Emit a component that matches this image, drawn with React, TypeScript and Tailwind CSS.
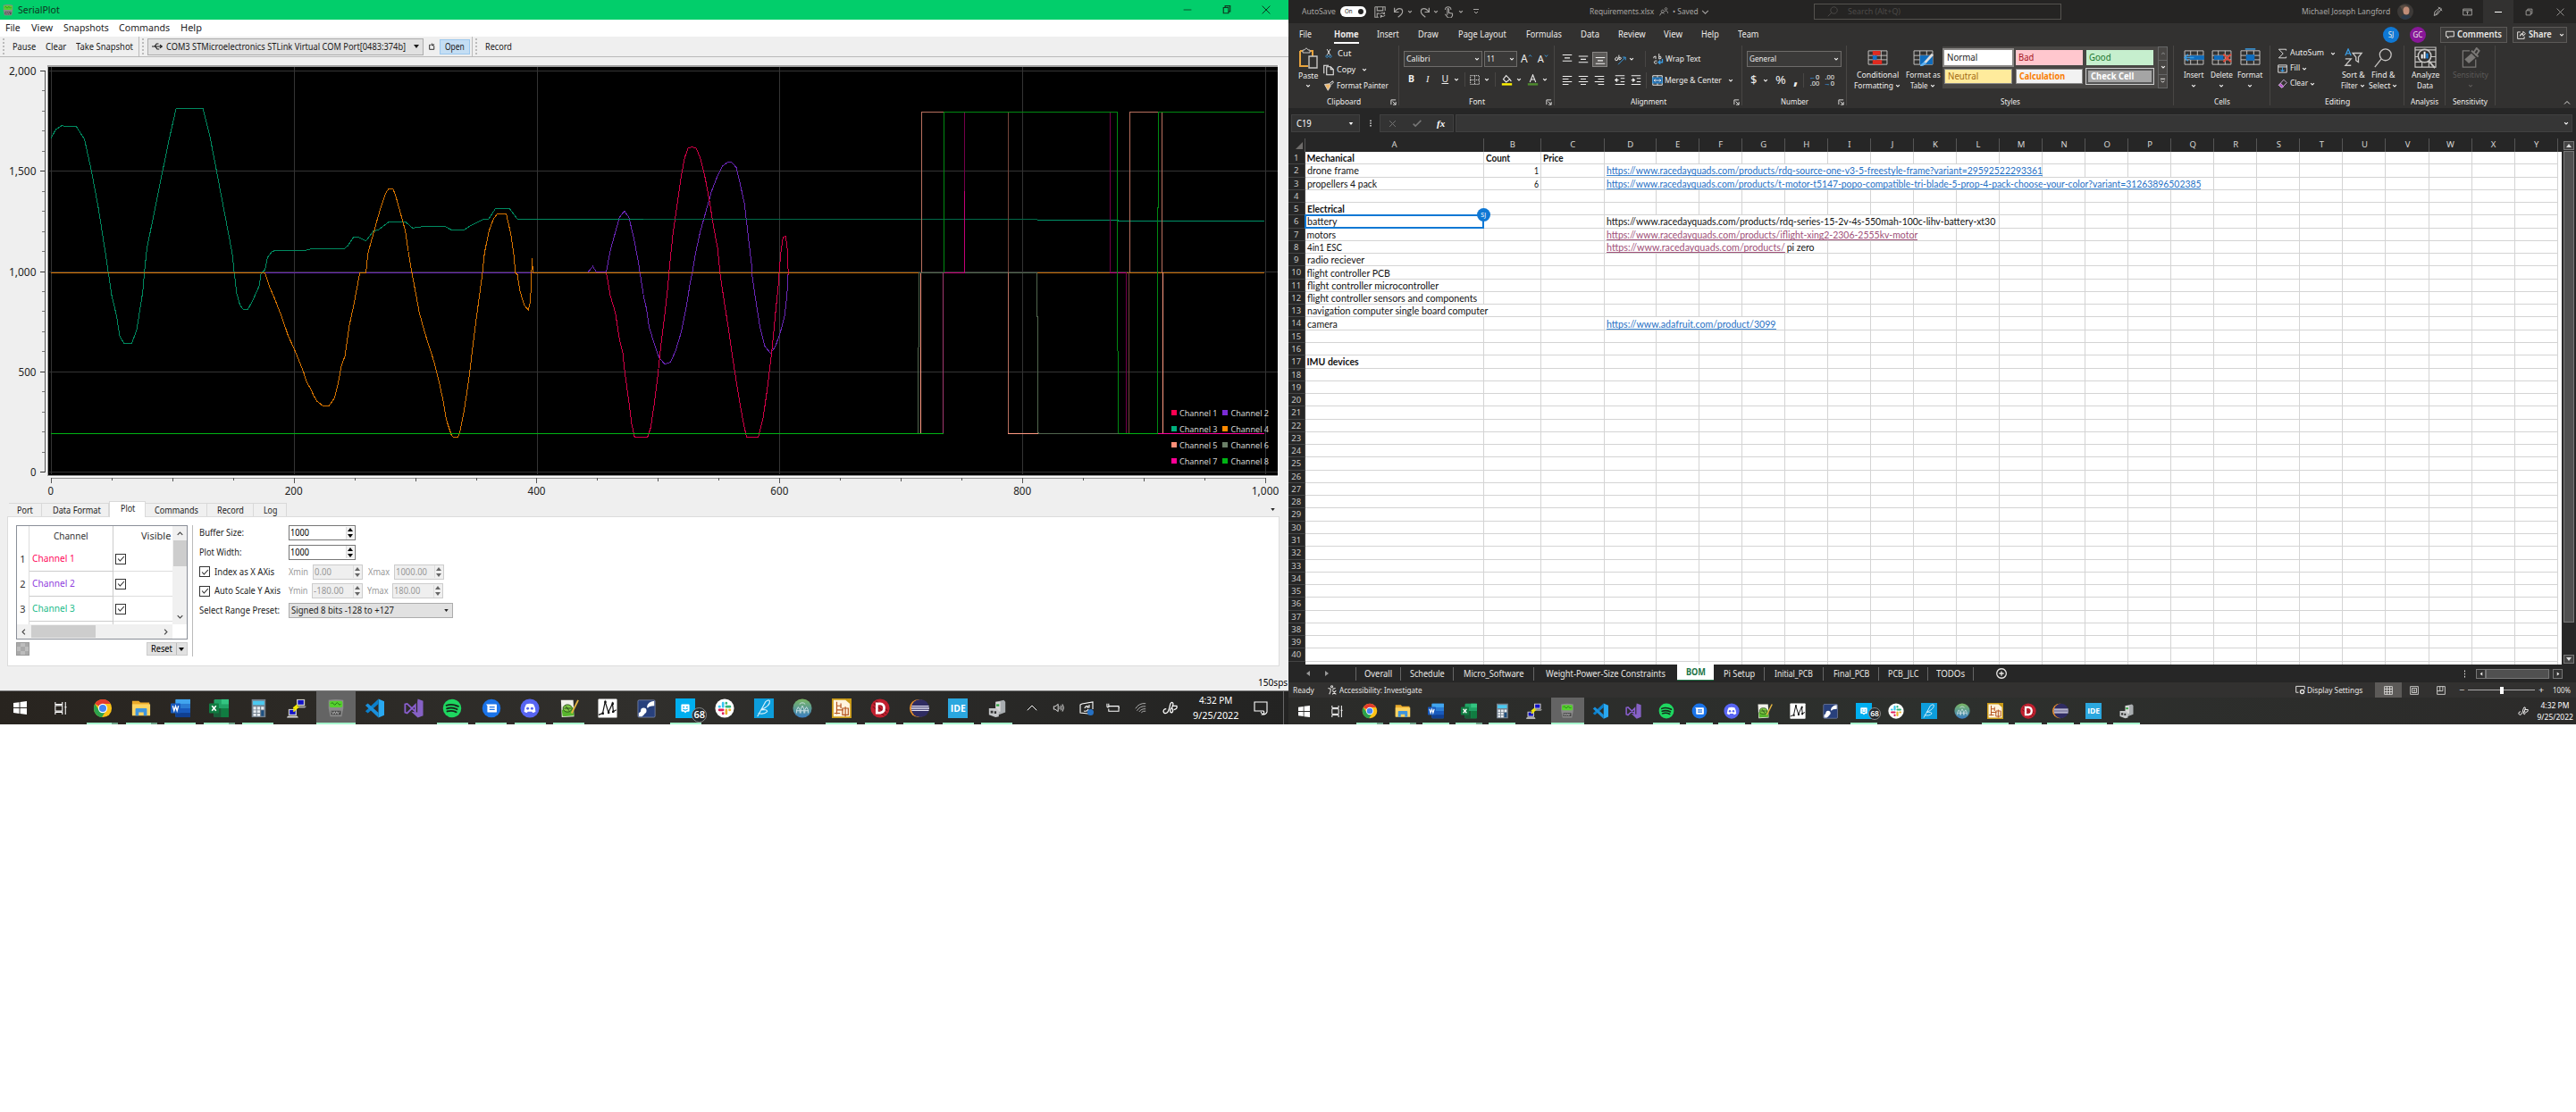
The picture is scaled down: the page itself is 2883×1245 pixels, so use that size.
import React, { useLayoutEffect, useRef, useState } from "react";

const UI = "font-['Noto_Sans','Open_Sans',sans-serif]";

/* A line of text squeezed or stretched to the width its box is given. */
function T({ c = "", children }: { c?: string; children: React.ReactNode }) {
  const box = useRef<HTMLSpanElement>(null);
  const inner = useRef<HTMLSpanElement>(null);
  const [s, setS] = useState(1);
  useLayoutEffect(() => {
    if (box.current && inner.current && inner.current.offsetWidth) {
      const r = box.current.getBoundingClientRect().width / inner.current.offsetWidth;
      if (r > 0.1) setS(r);
    }
  }, []);
  return (
    <span ref={box} className={`block shrink-0 whitespace-nowrap ${c}`}>
      <span ref={inner} className="inline-block origin-left" style={{ transform: `scaleX(${s})` }}>
        {children}
      </span>
    </span>
  );
}

/* Stroke icon in a 16x16 box. */
function I({ d, c = "w-3 h-3", w = 1.3, children }: { d?: string; c?: string; w?: number; children?: React.ReactNode }) {
  return (
    <svg viewBox="0 0 16 16" className={`shrink-0 ${c}`} fill="none" stroke="currentColor" strokeWidth={w}>
      {d && <path d={d} />}
      {children}
    </svg>
  );
}
const Chev = ({ c = "" }: { c?: string }) => <I d="M3 5.5L8 10.5L13 5.5" w={3} c={`w-[6px] h-[6px] ${c}`} />;

/* ---------------- taskbar icons (24x24) ---------------- */
const icons: Record<string, React.ReactNode> = {
  chrome: (
    <>
      <circle cx="12" cy="12" r="11" fill="#fbc116" />
      <path d="M12 12L2.5 6.5A11 11 0 0 1 21.5 6.5H12Z" fill="#e33b2e" />
      <path d="M2.5 6.5A11 11 0 0 0 11 23L16.5 14L12 12L7 13.5Z" fill="#2ba24c" />
      <circle cx="12" cy="12" r="5.6" fill="#fff" />
      <circle cx="12" cy="12" r="4.4" fill="#4285f4" />
    </>
  ),
  explorer: (
    <>
      <path d="M1 3H9L11 5H22V20H1Z" fill="#e9a92a" />
      <path d="M1 7H23V21H1Z" fill="#fcd462" />
      <path d="M5 21V13Q5 12 6 12H18Q19 12 19 13V21H15V17H9V21Z" fill="#3f95dd" />
    </>
  ),
  word: (
    <>
      <rect x="6" y="1" width="18" height="22" rx="1.5" fill="#2b7cd3" />
      <rect x="6" y="1" width="18" height="5.5" fill="#41a5ee" />
      <rect x="6" y="12" width="18" height="5.5" fill="#185abd" />
      <rect x="6" y="17.5" width="18" height="5.5" fill="#103f91" />
      <rect x="0" y="6" width="12" height="12" rx="1" fill="#185abd" />
      <path d="M2.5 9L4.2 15L6 9.5L7.8 15L9.5 9" stroke="#fff" strokeWidth="1.5" fill="none" />
    </>
  ),
  excel: (
    <>
      <rect x="6" y="1" width="18" height="22" rx="1.5" fill="#21a366" />
      <rect x="15" y="1" width="9" height="6" fill="#33c481" />
      <rect x="6" y="12" width="9" height="11" fill="#185c37" />
      <rect x="15" y="12" width="9" height="11" fill="#107c41" />
      <rect x="0" y="6" width="12" height="12" rx="1" fill="#107c41" />
      <path d="M3.5 9L8.5 15M8.5 9L3.5 15" stroke="#fff" strokeWidth="1.7" />
    </>
  ),
  calc: (
    <>
      <rect x="4" y="1" width="17" height="22" fill="#76828e" />
      <rect x="5.5" y="3" width="14" height="5" fill="#4cc9f0" />
      <path d="M6 10h3.500v3.500h-3.500zM10.700 10h3.500v3.500h-3.500zM15.500 10h3.500v3.500h-3.500zM6 14.500h3.500v3h-3.500zM10.700 14.500h3.500v3h-3.500zM6 18.500h3.500v3h-3.500zM10.700 18.500h3.500v3h-3.500z" fill="#e8edf2" />
      <path d="M15.500 14.500h3.500v7h-3.500z" fill="#1c4f80" />
    </>
  ),
  putty: (
    <>
      <rect x="12" y="1" width="10" height="8" fill="#c9c9c9" />
      <rect x="13.500" y="2.200" width="7" height="5.200" fill="#1010c8" />
      <path d="M11 9.500H24L22 11.500H12Z" fill="#aaa" />
      <rect x="2" y="13" width="10" height="8" fill="#c9c9c9" />
      <rect x="3.500" y="14.200" width="7" height="5.200" fill="#1010c8" />
      <path d="M1 21.500H13L14 23.500H0Z" fill="#ddd" />
      <path d="M13 8L8 12L13 11L8 16" stroke="#f4e900" strokeWidth="2" fill="none" />
    </>
  ),
  serial: (
    <>
      <path d="M3 2Q12 0 21 2V12L19 22H5L3 12Z" fill="#8a8a8a" />
      <rect x="4" y="3" width="16" height="8" rx="2" fill="#55d12e" />
      <path d="M6 6.500q1.500-3 3 0q1.500 3 3 0q1.500-3 3 0q1.500 3 3 0" stroke="#1e6b10" fill="none" />
      <rect x="6" y="15" width="12" height="5" fill="#444" />
      <path d="M7 16l1.500 3 1.500-3 1.500 3 1.500-3 1.500 3 1.500-3" stroke="#ccc" strokeWidth=".8" fill="none" />
    </>
  ),
  vscode: (
    <>
      <path d="M17 0.500L24 3.500V20.500L17 23.500Z" fill="#29a8f0" />
      <path d="M17 0.500V6.500L4 18L1 15.500Z" fill="#0a7fcb" />
      <path d="M17 23.500V17.500L4 6L1 8.500Z" fill="#1a90dc" />
    </>
  ),
  vs: (
    <>
      <path d="M17 0.500L23.500 3V21L17 23.500L9 16L16.500 17V4Z" fill="#8661c5" />
      <path d="M1.500 7V17L4 18L14 8V16L4 6.500Z" fill="none" stroke="#8a5fd0" strokeWidth="2" />
    </>
  ),
  spotify: (
    <>
      <circle cx="12" cy="12" r="11.200" fill="#1ed760" />
      <path d="M5 8.500Q12 6 19.500 9.700M5.500 12.300Q12 10.300 18 13.300M6 15.800Q12 14 17 16.700" stroke="#15281b" strokeWidth="2" fill="none" strokeLinecap="round" />
    </>
  ),
  messages: (
    <>
      <circle cx="12" cy="12" r="11.200" fill="#1a73e8" />
      <path d="M5.500 7H17.500Q18.500 7 18.500 8V16Q18.500 17 17.500 17H8Q7 17 7 16V9Z" fill="#fff" />
      <path d="M9.500 10.500H16M9.500 13.500H16" stroke="#1a73e8" strokeWidth="1.400" />
    </>
  ),
  discord: (
    <>
      <circle cx="12" cy="12" r="11.500" fill="#5865f2" />
      <path d="M7.500 7Q12 5.500 16.500 7Q19 11 19 16Q17 17.500 15.500 17.500L14.500 16H9.500L8.500 17.500Q7 17.500 5 16Q5 11 7.500 7Z" fill="#fff" />
      <circle cx="9.400" cy="12.300" r="1.600" fill="#5865f2" />
      <circle cx="14.600" cy="12.300" r="1.600" fill="#5865f2" />
    </>
  ),
  npp: (
    <>
      <path d="M2 2H17L18 22L3 23Z" fill="#f1f1ea" />
      <path d="M3 14L17 11L18 21L4 22Z" fill="#58b52d" />
      <ellipse cx="10" cy="12" rx="5.500" ry="4.500" fill="#7ec943" stroke="#244b14" />
      <path d="M6 12H14M8 9.500L12 15" stroke="#27441b" />
      <path d="M23 2L15 18" stroke="#e3b341" strokeWidth="2" />
    </>
  ),
  mchart: (
    <>
      <rect x=".5" y=".5" width="23" height="23" rx="1" fill="#fff" />
      <path d="M1 20L6 18L9 4L13 17L18 6L19 16L22.500 14" stroke="#111" strokeWidth="1.300" fill="none" />
      <path d="M5 17h2.500v2.500h-2.500zM8 3h2.500v2.500h-2.500zM12 16h2.500v2.500h-2.500zM17 5h2.500v2.500h-2.500zM17.500 15h2.500v2.500h-2.500z" fill="#111" />
    </>
  ),
  foxit: (
    <>
      <rect x="1" y="2" width="21" height="21" rx="1.500" fill="#28407c" stroke="#8d99bd" strokeWidth=".7" />
      <path d="M12 10Q13 4 21 3V9Q14 9 13 12Z" fill="#fff" />
      <circle cx="8" cy="15" r="3.500" fill="#fff" />
      <path d="M2 22V18L8 13L10 17Q9 21 6 22Z" fill="#fff" />
    </>
  ),
  groupme: (
    <>
      <rect width="24" height="24" fill="#00aff0" />
      <path d="M8 7H16Q17 7 17 8V15Q17 16 16 16H13.500L12 18L10.500 16H8Q7 16 7 15V8Q7 7 8 7Z" fill="#fff" />
      <path d="M9 10.500H11M13 10.500H15M9 13Q12 15.500 15 13" stroke="#00aff0" strokeWidth="1.200" fill="none" />
    </>
  ),
  slack: (
    <>
      <circle cx="12" cy="12" r="11.500" fill="#fff" />
      <g strokeWidth="2.900" strokeLinecap="round">
        <path d="M10 5.500V10M5.500 10H6" stroke="#36c5f0" />
        <path d="M14 10H18.500M14 5.500V6" stroke="#2eb67d" />
        <path d="M14 14V18.500M18 14H18.500" stroke="#ecb22e" />
        <path d="M10 14H5.500M10 18V18.500" stroke="#e01e5a" />
      </g>
    </>
  ),
  feather: (
    <>
      <rect width="24" height="24" fill="#0d9ddb" />
      <path d="M4 22L14 4Q18 1 19 3Q20 9 8 14Q16 13 16 16Q12 20 5 18" stroke="#d7f1fb" strokeWidth="1.200" fill="none" />
    </>
  ),
  globe: (
    <>
      <defs>
        <linearGradient id="gl" x1="0" y1="0" x2="0" y2="1">
          <stop offset="0" stopColor="#7bb661" />
          <stop offset="1" stopColor="#3b7fc4" />
        </linearGradient>
      </defs>
      <circle cx="12" cy="12" r="11.500" fill="url(#gl)" />
      <path d="M8.500 7Q12 3.500 15.500 7M5 18V14L7 10.500L9 14V18M10 18V13L12 9L14 13V18M15 18V14L17 10.500L19 14V18M5 15H9M10 15H14M15 15H19" stroke="#d2e4ea" strokeWidth="1" fill="none" />
    </>
  ),
  kicad: (
    <>
      <path d="M1 1H17L23 6V23H1Z" fill="#fff3dd" stroke="#c99a16" strokeWidth="2" />
      <path d="M17 0H24V7Z" fill="#c99a16" />
      <path d="M6 4V19M6 9H11M6 14H14M11 6V12M13 12H20V20H13ZM16.500 10V22M3 18H10" stroke="#b5541f" strokeWidth="1.300" fill="none" />
    </>
  ),
  d: (
    <>
      <circle cx="12" cy="12" r="11.500" fill="#c1202f" />
      <path d="M4 6L20 19M3 10L17 21M7 3L21 15" stroke="#7d1019" strokeWidth="1.200" />
      <path d="M8 6.500H12Q17 7 17 12Q17 17 12 17.500H8Z" fill="none" stroke="#fff" strokeWidth="3" />
    </>
  ),
  eclipse: (
    <>
      <circle cx="11" cy="12" r="11" fill="#f0932a" />
      <circle cx="13" cy="12" r="11" fill="#2f2c62" />
      <path d="M2.500 9.500H23.500M2 12H24M2.500 14.500H23.500" stroke="#e3e1f2" strokeWidth="1.400" />
    </>
  ),
  ide: (
    <>
      <rect width="24" height="24" fill="#2ba7df" />
      <text x="3" y="16.500" fontSize="12.500" fontWeight="700" fill="#fff" textLength="18.500" lengthAdjust="spacingAndGlyphs" fontFamily="Open Sans, sans-serif">IDE</text>
    </>
  ),
  device: (
    <>
      <path d="M11 4L20 2L22 4V17L14 20L10 17Z" fill="#a9adb0" />
      <path d="M10 4H16V16H10Z" fill="#d8d8d8" />
      <path d="M11 7H14.500V9.500H11Z" fill="#28a23a" />
      <path d="M2 12H11L14 15V22L10 23L2 20Z" fill="#c4c6c8" />
      <path d="M4 15H7V18H4ZM8.500 15.500H11V18.500H8.500Z" fill="#333" />
    </>
  ),
};
const order = ["chrome", "explorer", "word", "excel", "calc", "putty", "serial", "vscode", "vs", "spotify", "messages", "discord", "npp", "mchart", "foxit", "groupme", "slack", "feather", "globe", "kicad", "d", "eclipse", "ide", "device"];
const running = new Set(["chrome", "explorer", "word", "excel", "calc", "serial", "spotify", "messages", "discord", "npp", "groupme", "kicad", "d", "eclipse", "ide", "device"]);
const stacked = new Set(["chrome", "explorer", "excel"]);

function AppButtons({ small }: { small?: boolean }) {
  return (
    <>
      {order.map((n) => (
        <div key={n} className={`relative flex h-full shrink-0 items-center justify-center ${small ? "w-[36.82px]" : "w-[43.53px]"} ${n === "serial" ? "bg-[#646464]" : ""}`}>
          <svg viewBox="0 0 24 24" className={small ? "size-[18px]" : "size-[22px]"}>{icons[n]}</svg>
          {n === "groupme" && (
            <span className={`absolute flex items-center justify-center rounded-full border border-[#888] bg-[#25292c] font-semibold text-white ${small ? "right-[-1px] bottom-[5px] size-[14px] text-[8.5px]" : "right-[-2px] bottom-0.5 size-[17px] text-[11px]"}`}>68</span>
          )}
          {running.has(n) && (
            <span className={`absolute bottom-0 flex h-0.5 justify-end bg-[#a5f4cc] ${n === "serial" ? "w-full" : small ? "w-[30px]" : "w-[35px]"}`}>
              {stacked.has(n) && <i className="h-full w-[7px] bg-[#6fa68b]" />}
            </span>
          )}
        </div>
      ))}
    </>
  );
}
const WinLogo = ({ c }: { c: string }) => (
  <svg viewBox="0 0 16 16" className={`shrink-0 ${c}`} fill="#fff">
    <path d="M0 2.200L7 1.200V7.500H0ZM8 1L16 0V7.500H8ZM0 8.500H7V14.800L0 13.800ZM8 8.500H16V16L8 15Z" />
  </svg>
);
const TaskView = ({ c }: { c: string }) => <I c={`text-white ${c}`} w={1.2} d="M1 0V3H10V0M1 4.500H10V11.500H1ZM1 16V13H10V16M14 0V16M13 6.500H15.500" />;
const PenIcon = ({ c }: { c: string }) => <I c={c} d="M4 9Q1 9 1 12Q2 15 5 13Q7 11 8 5Q9 1 11 3Q12 5 9 9Q7 13 10 13Q12 11 10 8M10 6L15 6Q16 9 12 10" w={1.2} />;

/* ---------------- SerialPlot chart ---------------- */
const yTicks = ["2,000", "1,500", "1,000", "500", "0"];
const legend = [
  ["#ff0051", "#7b2bd6"],
  ["#00b07e", "#ff8a00"],
  ["#ff8f78", "#6b8068"],
  ["#ff0096", "#00b414"],
];
function Chart() {
  const xs = Array.from({ length: 21 }, (_, i) => i);
  return (
    <svg viewBox="0 64 1442 498" shapeRendering="crispEdges" className="block h-[498px] w-[1442px] shrink-0" fill="none" fontFamily="Noto Sans, sans-serif">
      <rect x="53" y="73" width="1378" height="460" fill="#a0a0a0" />
      <path d="M1430.500 73V533H54" stroke="#fff" />
      <rect x="54" y="75" width="1376" height="457" fill="#000" />
      {yTicks.map((t, i) => (
        <g key={t}>
          <path d={`M55 ${79.5 + i * 112.25}H1430`} stroke="#343434" />
          <path d={`M44.500 ${79.5 + i * 112.25}H51`} stroke="#333" />
          {i < 4 && [1, 2, 3, 4].map((k) => <path key={k} d={`M47 ${79.5 + i * 112.25 + k * 22.45}H51`} stroke="#777" />)}
          <text x="40.500" y={84 + i * 112.25} textAnchor="end" fontSize="12" fill="#222" textLength={t.length === 5 ? 30.5 : t.length === 3 ? 20 : 6.500} lengthAdjust="spacingAndGlyphs">{t}</text>
        </g>
      ))}
      <path d="M50.500 79.500V529" stroke="#555" />
      <path d="M57 535.500H1417" stroke="#999" />
      {[0, 1, 2, 3, 4, 5].map((i) => (
        <g key={i}>
          <path d={`M${57.3 + i * 271.85} 75V531`} stroke="#343434" />
          <text x={56.8 + i * 271.85} y="553.500" textAnchor="middle" fontSize="12" fill="#222" textLength={i === 0 ? 6.500 : i === 5 ? 30.500 : 20} lengthAdjust="spacingAndGlyphs">{i === 5 ? "1,000" : i * 200}</text>
        </g>
      ))}
      {xs.map((i) => (
        <path key={i} d={`M${57.3 + i * 67.96} 535V${i % 4 === 0 ? 541 : i % 2 === 0 ? 539 : 537.5}`} stroke="#555" />
      ))}
      {/* left half of the traces, 2.178 x 3 units per pixel */}
      <g transform="scale(0.45914 0.33333)" strokeWidth="1">
        <path vectorEffect="non-scaling-stroke" stroke="#6a26b8" d="M124 916.500H1432L1445 895L1453 912L1478 914L1487 845L1500 780L1510 730L1522 709L1533 730L1545 800L1556 880L1560 916L1568 988" />
        <path vectorEffect="non-scaling-stroke" stroke="#d30046" d="M1478 916L1488 995L1500 1050L1510 1140L1518 1185L1523 1250L1533 1350L1540 1425L1547 1469H1568" />
        <path vectorEffect="non-scaling-stroke" stroke="#008a60" d="M124 465L136 435L148 424L152 421L156 424L186 425L206 468L223 575L240 700L257 850L264 915L272 990L284 1060L292 1130L302 1153H321L333 1110L348 980L352 915L358 835L378 700L397 570L412 470L429 366H495L512 460L528 575L548 720L566 850L571 915L577 985L585 1025L593 1039H604L614 1015L632 960L636 920L646 905L652 865L663 845L672 841H745L755 837H838L848 825L861 798L874 797L892 809L910 776L921 773L948 745H988L1006 766L1030 761H1085L1100 772H1131L1147 758L1176 738H1190L1208 700H1242L1262 737H1568" />
        <path vectorEffect="non-scaling-stroke" stroke="#d87400" d="M124 916.500H646L656 960L670 1005L687 1065L703 1130L716 1168L727 1205L740 1250L748 1285L757 1305L765 1330L773 1348L787 1363H802L815 1338L824 1290L832 1230L841 1195L852 1090L863 1020L877 916.500H892L897 850L912 776L921 730L930 690L940 650L947 634H958L965 660L975 710L988 775L997 860L1004 916L1010 960L1022 1050L1036 1120L1050 1180L1058 1215L1070 1280L1080 1345L1088 1410L1100 1460L1106 1469H1116L1122 1445L1130 1390L1138 1320L1147 1230L1150 1190L1160 1080L1170 980L1176 916L1181 850L1192 775L1203 735L1212 718H1234L1245 785L1253 860L1256 916L1261 922L1268 980L1278 1025L1288 1042L1293 1010L1297 868L1299 916.500H1568" />
        <path vectorEffect="non-scaling-stroke" stroke="#00b414" d="M124 1456.500H1568" />
      </g>
      {/* right half of the traces */}
      <g transform="translate(720 0) scale(0.46237 0.35714)" strokeWidth="1">
        <path vectorEffect="non-scaling-stroke" stroke="#6a26b8" d="M0 925L8 970L14 1025L27 1080L38 1120L52 1142L66 1135L78 1100L92 1040L103 970L113 890L119 850L127 790L138 725L150 670L165 600L180 550L192 520L205 508L215 510L225 525L235 580L245 640L253 730L262 830L264 870L272 940L283 1030L294 1085L308 1108L320 1085L332 1040L342 990L348 920L351 846" />
        <path vectorEffect="non-scaling-stroke" stroke="#d30046" d="M0 1371H10L18 1340L26 1270L34 1190L42 1090L52 985L60 890L63 840L72 730L82 640L92 550L100 495L108 465L118 461L128 465L138 495L150 560L160 630L170 710L180 780L186 860L194 930L206 1030L216 1120L228 1220L240 1310L250 1372H278L290 1310L300 1220L312 1090L320 980L327 890L332 800L338 745L344 740L348 770L351 862" />
        <path vectorEffect="non-scaling-stroke" stroke="#006a49" d="M0 688H953" />
        <path vectorEffect="non-scaling-stroke" stroke="#00946a" d="M953 690H1150V693H1503" />
        <path vectorEffect="non-scaling-stroke" stroke="#c66a00" d="M0 855.400H1503" />
        <path vectorEffect="non-scaling-stroke" stroke="#51664e" d="M666 1359.400V1108L668 855.400H953L956 1359.400H1150" />
        <path vectorEffect="non-scaling-stroke" stroke="#ff9a82" d="M671 1359.400V857M883 1359.400H955M1258 855V1359.400" />
        <path vectorEffect="non-scaling-stroke" stroke="#b9705f" d="M674 855V351.400H728M883 855V1359M1178 855V351.400H1246M1255 351V855" />
        <path vectorEffect="non-scaling-stroke" stroke="#74463b" d="M883 351V855M1176 855V1359" />
        <path vectorEffect="non-scaling-stroke" stroke="#a0386e" d="M726 1359V855" />
        <path vectorEffect="non-scaling-stroke" stroke="#c40077" d="M728 855.400H778V600M1130 855.400H1168" />
        <path vectorEffect="non-scaling-stroke" stroke="#74004a" d="M778 600V351M1130 351V855M1169 855V1359" />
        <path vectorEffect="non-scaling-stroke" stroke="#ff00a0" d="M1246 1359.400H1503" />
        <path vectorEffect="non-scaling-stroke" stroke="#008a12" d="M728 855V351.400H1147V855L1150 1359M1245 1359V855L1247 351.400H1503" />
        <path vectorEffect="non-scaling-stroke" stroke="#00b414" d="M0 1359.400H727M1150 1359.400H1245" />
      </g>
      {legend.map((r, i) => (
        <g key={i} fontSize="9.500" fill="#d6d6d6">
          <rect x="1311" y={459 + i * 18} width="6" height="6" fill={r[0]} />
          <text x="1320" y={465.5 + i * 18} textLength="42.500" lengthAdjust="spacingAndGlyphs">Channel {i * 2 + 1}</text>
          <rect x="1368" y={459 + i * 18} width="6" height="6" fill={r[1]} />
          <text x="1377.500" y={465.5 + i * 18} textLength="42.500" lengthAdjust="spacingAndGlyphs">Channel {i * 2 + 2}</text>
        </g>
      ))}
    </svg>
  );
}

const Check = () => (
  <span className="flex size-3 shrink-0 items-center justify-center border border-[#333] bg-white text-[#222]">
    <I d="M2 8L6 12.500L14 3.500" c="size-[9px]" w={1.8} />
  </span>
);
const Grip = ({ c }: { c: string }) => <span className={`h-[18px] w-0.5 shrink-0 border-l-2 border-dotted border-[#bbb] ${c}`} />;
const Spin = ({ c, tc, v, dis }: { c: string; tc: string; v: string; dis?: boolean }) => (
  <span className={`flex h-[17px] shrink-0 items-center border ${dis ? "border-[#ccc] bg-[#efefef] text-[#999]" : "border-[#777] bg-white text-black"} ${c}`}>
    <T c={`ml-px ${tc}`}>{v}</T>
    <span className={`mr-px ml-auto flex h-[14px] w-[9px] flex-col items-center justify-around border-l border-[#ddd] bg-[#f0f0f0] ${dis ? "text-[#666]" : "text-black"}`}>
      <svg viewBox="0 0 6 4" className="h-[4px] w-[6px]" fill="currentColor"><path d="M3 0L6 4H0Z" /></svg>
      <svg viewBox="0 0 6 4" className="h-[4px] w-[6px]" fill="currentColor"><path d="M0 0H6L3 4Z" /></svg>
    </span>
  </span>
);
const Down = ({ c = "" }: { c?: string }) => (
  <svg viewBox="0 0 6 4" className={`h-1 w-1.5 shrink-0 ${c}`} fill="currentColor"><path d="M0 0H6L3 4Z" /></svg>
);

function SerialPlot() {
  return (
    <div className={`flex h-[773px] flex-col bg-[#efefef] text-black ${UI}`}>
      <div className="flex h-[22px] shrink-0 items-center bg-[#02ce6b] text-[11px] text-[#10351f]">
        <svg viewBox="0 0 24 24" className="ml-0.5 h-[15px] w-[14px]">{icons.serial}</svg>
        <T c="ml-[4px] w-[47px]">SerialPlot</T>
        <I d="M1 8H15" c="ml-[1257px] h-[10px] w-[10px]" />
        <I d="M2 4H11V14H2ZM5 4V1H14V11H11" c="ml-[34px] size-[10px]" w={1.8} />
        <I d="M1 1L15 15M15 1L1 15" c="ml-[34px] size-[10px]" w={1.6} />
      </div>
      <div className="flex h-[19px] shrink-0 items-center bg-white text-[11px] text-[#222]">
        <T c="ml-1.5 w-[17px]">File</T>
        <T c="ml-3 w-6">View</T>
        <T c="ml-3 w-[51px]">Snapshots</T>
        <T c="ml-[11px] w-[57px]">Commands</T>
        <T c="ml-3 w-6">Help</T>
      </div>
      <div className="flex h-[23px] shrink-0 items-center border-b border-[#b9b9b9] text-[10px] text-[#1a1a1a]">
        <Grip c="ml-[3px]" />
        <T c="ml-[9px] w-[26px]">Pause</T>
        <T c="ml-[11px] w-[23px]">Clear</T>
        <T c="ml-[11px] w-[64px]">Take Snapshot</T>
        <span className="ml-[6px] h-full w-px bg-[#bbb]" />
        <Grip c="ml-[3px]" />
        <div className="ml-1 flex h-[19px] w-[309px] items-center border border-[#acacac] bg-[#e1e1e1]">
          <I d="M0 8H15M12 5.500L15 8L12 10.500M4 8L7 4H10M5 8L8 12H11" c="ml-[3px] h-[12px] w-[14px]" w={1.6} />
          <T c="ml-[3px] w-[268px]">COM3 STMicroelectronics STLink Virtual COM Port[0483:374b]</T>
          <Down c="ml-[9px]" />
        </div>
        <I d="M6 4H3V13H12V6M8 1V5H12M12 2L9 5" c="ml-[5px] size-[9px]" w={1.6} />
        <div className="ml-[4px] flex h-[17px] w-[34px] items-center justify-center border border-[#9cc8ee] bg-[#c4def4]"><T c="w-[22px]">Open</T></div>
        <span className="ml-[2px] h-full w-px bg-[#bbb]" />
        <Grip c="ml-[3px]" />
        <T c="ml-[9px] w-[30px]">Record</T>
      </div>
      <Chart />
      <div className="flex h-[16px] shrink-0 items-end pl-[10px] text-[10px] text-[#222]">
        {[["w-[37px]", "w-[18px]", "Port"], ["w-[75px] pl-[3px]", "w-[54px]", "Data Format"], ["w-[41px]", "w-[16px]", "Plot"], ["w-[69px]", "w-[49px]", "Commands"], ["w-[52px]", "w-[30px]", "Record"], ["w-[37px]", "w-[15px]", "Log"]].map(([a, b, t]) => (
          <div key={t} className={`flex shrink-0 items-center justify-center border-t border-r border-[#d9d9d9] ${a} ${t === "Plot" ? "z-10 mb-[-1px] h-[18px] border-l bg-white pb-0.5" : "h-[15px] bg-[#f0f0f0]"}`}><T c={b}>{t}</T></div>
        ))}
        <Down c="mb-1.5 ml-auto mr-[15px] h-[3px] w-[5px]" />
      </div>
      <div className="ml-[8px] flex h-[168px] w-[1424px] shrink-0 border border-[#dcdcdc] bg-white pt-[9px] pl-[9px] text-[10px]">
        <div className="flex w-[192px] shrink-0 flex-col">
          <div className="flex h-[128px] shrink-0 flex-col border border-[#8a8f98]">
            <div className="flex h-[110px]">
              <div className="flex w-[174px] flex-col overflow-hidden text-[11px] text-[#333]">
                <div className="flex h-[23px] shrink-0 items-center">
                  <span className="h-full w-[14px] border-r border-[#ddd]" />
                  <span className="flex h-full w-[94px] items-center justify-center border-r border-[#ccc]"><T c="w-[39px]">Channel</T></span>
                  <T c="ml-[31px] w-[33px]">Visible</T>
                </div>
                {[["1", "text-[#ff0a5c]"], ["2", "text-[#9040dd]"], ["3", "text-[#1dbb8b]"], ["", ""]].map(([n, k]) => (
                  <div key={n} className="flex h-[28px] shrink-0">
                    <span className="flex w-[14px] items-center justify-center border-r border-[#ddd]">{n}</span>
                    <span className={`flex w-[94px] items-center border-r border-b border-[#ccc] pl-[3px] ${k}`}>{n && <T c="w-[48px]">Channel {n}</T>}</span>
                    <span className="flex flex-1 items-center border-b border-[#ddd] pl-0.5">{n && <Check />}</span>
                  </div>
                ))}
              </div>
              <div className="flex w-4 flex-col items-center bg-[#f0f0f0] text-[#444]">
                <I d="M3 10.500L8 5.500L13 10.500" w={2} c="mt-1 size-[9px]" />
                <span className="mt-[3px] h-[29px] w-[15px] bg-[#cdcdcd]" />
                <I d="M3 5.500L8 10.500L13 5.500" w={2} c="mt-auto mb-1 size-[9px]" />
              </div>
            </div>
            <div className="flex h-4 w-[174px] items-center bg-[#f0f0f0] text-[#444]">
              <I d="M10.500 3L5.500 8L10.500 13" w={2} c="ml-[3px] size-[9px]" />
              <span className="ml-1 h-[14px] w-[72px] bg-[#cdcdcd]" />
              <I d="M5.500 3L10.500 8L5.500 13" w={2} c="mr-[3px] ml-auto size-[9px]" />
            </div>
          </div>
          <div className="mt-[3px] flex h-[15px] justify-between">
            <span className="grid w-[15px] grid-cols-3 grid-rows-3 border border-[#999] bg-[#bdbdbd]">
              <i className="bg-[#a9a9a9]" /><i /><i className="bg-[#a9a9a9]" /><i /><i className="bg-[#a9a9a9]" /><i /><i className="bg-[#a9a9a9]" /><i /><i className="bg-[#a9a9a9]" />
            </span>
            <span className="flex w-[46px] items-center border border-[#ccc] bg-[#e1e1e1]">
              <T c="ml-1 w-6">Reset</T>
              <span className="ml-1 h-[13px] w-px bg-[#bbb]" />
              <Down c="ml-0.5" />
            </span>
          </div>
        </div>
        <span className="ml-[5px] h-[147px] w-px shrink-0 bg-[#bbb]" />
        <div className="ml-[7px] flex flex-col gap-[4.8px] text-[#222]">
          <div className="flex h-[17px] items-center"><T c="w-[50px]">Buffer Size:</T><Spin c="ml-[50px] w-[75px]" tc="w-[21px]" v="1000" /></div>
          <div className="flex h-[17px] items-center"><T c="w-[47px]">Plot Width:</T><Spin c="ml-[53px] w-[75px]" tc="w-[21px]" v="1000" /></div>
          <div className="flex h-[17px] items-center text-[#999]">
            <Check /><T c="ml-[5px] w-[67px] text-[#222]">Index as X AXis</T>
            <T c="ml-[16px] w-[22px]">Xmin</T><Spin dis c="ml-[5px] w-[56px]" tc="w-[19px]" v="0.00" />
            <T c="ml-[6px] w-[24px]">Xmax</T><Spin dis c="ml-[5px] w-[56px]" tc="w-[35px]" v="1000.00" />
          </div>
          <div className="flex h-[17px] items-center text-[#999]">
            <Check /><T c="ml-[5px] w-[74px] text-[#222]">Auto Scale Y Axis</T>
            <T c="ml-[9px] w-[21px]">Ymin</T><Spin dis c="ml-[5px] w-[57px]" tc="w-[34px]" v="-180.00" />
            <T c="ml-[5px] w-[24px]">Ymax</T><Spin dis c="ml-[4px] w-[57px]" tc="w-[29px]" v="180.00" />
          </div>
          <div className="flex h-[17px] items-center">
            <T c="w-[90px]">Select Range Preset:</T>
            <div className="ml-[10px] flex h-[17px] w-[184px] items-center border border-[#acacac] bg-[#e1e1e1]"><T c="ml-0.5 w-[115px]">Signed 8 bits -128 to +127</T><Down c="mr-[4px] ml-auto h-[3px] w-[5px]" /></div>
          </div>
        </div>
      </div>
      <div className="mt-auto flex h-[17px] items-center justify-end pr-px text-[11px]"><T c="w-[33px]">150sps</T></div>
    </div>
  );
}

function LeftTaskbar() {
  return (
    <div className={`flex h-[38px] items-center border-t border-[#777] bg-gradient-to-r from-[#28241f] via-[#302f2c] to-[#232322] text-white ${UI}`}>
      <WinLogo c="ml-[15px] size-[15px]" />
      <TaskView c="ml-[30px] h-[14px] w-[16px]" />
      <span className="ml-[17px] flex h-full"><AppButtons /></span>
      <I d="M1 11L8 4L15 11" c="ml-[12px] size-[12px]" />
      <I d="M1 6H3L7 3V13L3 10H1ZM9 6Q10.500 8 9 10M11 4.500Q13.500 8 11 11.500M13 3Q16.500 8 13 13" c="ml-[16px] h-[13px] w-[16px]" w={1} />
      <I c="ml-[15px] size-[16px]" w={1.1} d="M3 3L1 4V13L10 14M3 3L15 1V9M6 8Q7 4.500 10 6M11 4V7H8M5 11Q9 12 10 9"><circle cx="12.500" cy="12.500" r="3.500" fill="#2671c4" stroke="none" /></I>
      <I d="M3 6H15V12H3V9M1 3V6Q1 8 3 7V3M15 8H16" c="ml-[14px] size-[15px]" w={1.1} />
      <I d="M1 9Q6 1 15 2M3 12Q7 5 15 6M6 13.500Q9 9 15 9.500M9 14.500Q11 12 15 12.500" c="ml-[17px] size-[13px] text-[#bbb]" w={1.1} />
      <PenIcon c="ml-[18px] size-[17px]" />
      <div className="ml-[17px] flex w-[51px] shrink-0 flex-col items-center text-[10px] leading-[17px]"><T c="w-[38px]">4:32 PM</T><T c="w-[51px]">9/25/2022</T></div>
      <I d="M1 1H15V12Q14 15 10 15Q13 13 11 11H1ZM10 15L8 12" c="ml-[17px] size-[16px]" w={1.1} />
      <span className="ml-[17px] h-full w-px bg-[#666]" />
    </div>
  );
}

/* ---------------- Excel ---------------- */
const Launch = ({ c }: { c: string }) => <I d="M2 14V2H14M6 6L14 14M14 7V14H7" c={`size-[7px] ${c}`} w={2} />;
function Group({ c, lc, label, launch, children }: { c: string; lc: string; label: string; launch?: boolean; children?: React.ReactNode }) {
  return (
    <div className={`flex h-[67px] shrink-0 flex-col border-r border-[#484644] ${c}`}>
      <div className="flex h-[57px] shrink-0">{children}</div>
      <div className="relative flex h-[12px] shrink-0 items-center justify-center text-[9.5px]">
        <T c={lc}>{label}</T>
        {launch && <Launch c="absolute right-0.5" />}
      </div>
    </div>
  );
}
const Grid3 = ({ c = "", children }: { c?: string; children?: React.ReactNode }) => (
  <svg viewBox="0 0 24 20" className={`h-[19px] w-[23px] shrink-0 ${c}`} fill="none" stroke="#c8c6c4">
    <path d="M1 2H23V18H1ZM1 7.500H23M1 12.500H23M8 2V18M16 2V18" />
    {children}
  </svg>
);
const Big = ({ c, icon, lines, wc, dim }: { c: string; icon: React.ReactNode; lines: [string, string][]; wc?: string; dim?: boolean }) => (
  <div className={`flex shrink-0 flex-col items-center text-[9.5px] leading-[12px] ${dim ? "text-[#5c5a58]" : ""} ${c}`}>
    <div className="flex h-[27px] items-center">{icon}</div>
    {lines.map(([t, w], i) => (
      <span key={t} className="flex h-[12px] items-center gap-0.5">
        <T c={w}>{t}</T>
        {wc && i === lines.length - 1 && lines.length > 1 && <Chev />}
      </span>
    ))}
    {wc && lines.length === 1 && <Chev c="mt-[3px]" />}
  </div>
);
const Lines = ({ d, c = "" }: { d: string; c?: string }) => <I d={d} c={`h-[12px] w-[12px] ${c}`} w={1.4} />;

const styleCells: [string, string, string][] = [
  ["Normal", "bg-white text-[#222] outline-2 outline-[#8a8886]", "w-[34px]"],
  ["Bad", "bg-[#ffc7ce] text-[#a5131c]", "w-[17px]"],
  ["Good", "bg-[#c6efce] text-[#18752a]", "w-[25px]"],
  ["Neutral", "bg-[#ffeb9c] text-[#a56a10] border border-[#888]", "w-[34px]"],
  ["Calculation", "bg-[#f2f2f2] text-[#fa7d00] font-bold border border-[#888]", "w-[51px]"],
  ["Check Cell", "bg-[#a5a5a5] text-white font-bold border-2 border-[#555] outline outline-[#ccc]", "w-[48px]"],
];

function Ribbon() {
  return (
    <div className="flex h-[70px] shrink-0 text-[#f0efee]">
      <Group c="w-[124px]" lc="w-[38px]" label="Clipboard" launch>
        <div className="ml-[11px] flex w-[22px] flex-col items-center text-[9.5px]">
          <svg viewBox="0 0 22 24" className="mt-[2px] h-[24px] w-[22px] shrink-0" fill="none">
            <path d="M2 4H16V10M11 21H2V4" stroke="#e8a33d" strokeWidth="2" />
            <path d="M5 6V3H7Q9-1 11 3H13V6Z" stroke="#c8c6c4" fill="#323130" />
            <path d="M12 10H21V23H12Z" stroke="#c8c6c4" strokeWidth="1.400" />
          </svg>
          <T c="mt-px w-[22px] leading-[13px]">Paste</T>
          <Chev c="mt-[2px]" />
        </div>
        <div className="ml-[6px] flex flex-col text-[9.5px]">
          <div className="flex h-[18px] items-center"><I c="ml-px h-[12px] w-[10px]" w={1.4} d="M5 0L11 11M11 0L5 11"><path d="M5 11a2 2 0 1 0 .1 0M11 11a2 2 0 1 0 .1 0" stroke="#3b9be0" /></I><T c="ml-[5px] w-[15px]">Cut</T></div>
          <div className="flex h-[18px] items-center"><I c="h-[13px] w-[12px]" w={1.4} d="M1 13V1H8M5 3H11L15 7V15H5ZM11 3V7H15" /><T c="ml-[3px] w-[21px]">Copy</T><Chev c="ml-[7px]" /></div>
          <div className="flex h-[18px] items-center"><I c="h-[12px] w-[12px]" d="M9 5L14 1L15 3L11 7"><path d="M2 6L9 5L11 8L7 15Z" fill="#f0b768" stroke="#d9d7d5" /></I><T c="ml-[3px] w-[58px]">Format Painter</T></div>
        </div>
      </Group>
      <Group c="w-[174px]" lc="w-[18px]" label="Font" launch>
        <div className="flex flex-col pl-[5px]">
          <div className="mt-[6px] flex h-[18px] items-center text-[9.5px]">
            <span className="flex h-[18px] w-[88px] items-center border border-[#6e6c6a] bg-[#3b3a39] pl-0.5"><T c="w-[26px]">Calibri</T><Chev c="mr-[2px] ml-auto" /></span>
            <span className="ml-[2px] flex h-[18px] w-[37px] items-center border border-[#6e6c6a] bg-[#3b3a39] pl-0.5"><T c="w-[9px]">11</T><Chev c="mr-[2px] ml-auto" /></span>
            <span className="ml-[4px] text-[12px]">A</span><I d="M3 11L8 5L13 11" c="mb-2 size-[5px] text-[#3b9be0]" w={3} />
            <span className="ml-[6px] text-[11px]">A</span><I d="M3 5L8 11L13 5" c="mb-2 size-[5px] text-[#3b9be0]" w={3} />
          </div>
          <div className="mt-[5px] flex h-[18px] items-center text-[10.5px]">
            <b className="ml-[5px]">B</b><i className="ml-[13px] font-['Liberation_Serif',serif]">I</i><u className="ml-[14px]">U</u><Chev c="ml-[6px]" />
            <span className="ml-[6px] h-[16px] w-px bg-[#484644]" />
            <I d="M2 2H14V14H2ZM8 2V14M2 8H14" c="ml-[4px] size-[13px] [stroke-dasharray:1.500_1]" w={1.1} />
            <Chev c="ml-[4px]" />
            <span className="ml-[6px] h-[16px] w-px bg-[#484644]" />
            <I c="ml-[6px] size-[13px]" d="M7 2L12 7L7 11L3 7ZM12 7L14 10"><path d="M1 14H15" stroke="#fff200" strokeWidth="3" /></I>
            <Chev c="ml-[4px]" />
            <I c="ml-[6px] size-[13px]" d="M4 11L8 1L12 11M5.500 7.500H10.500"><path d="M1 14H15" stroke="#4e8a2e" strokeWidth="3" /></I>
            <Chev c="ml-[4px]" />
          </div>
        </div>
      </Group>
      <Group c="w-[210px]" lc="w-[40px]" label="Alignment" launch>
        <div className="flex flex-col pl-[8px]">
          <div className="mt-[6px] flex h-[18px] items-center text-[9.5px]">
            <Lines d="M1 2H15M4 6.500H12M1 11H15" /><Lines c="ml-[6px]" d="M1 4H15M4 8.500H12M1 13H15" />
            <span className="ml-[4px] flex size-[17px] items-center justify-center border border-[#8a8886] bg-[#5c5a58]"><Lines d="M1 6H15M4 10.500H12M1 15H15" /></span>
            <I c="ml-[8px] size-[13px]" w={1.2} d="M1 9Q0 6 3 5Q6 6 4 9Q2 10 1 9M6 8V2M6 6Q9 4 9 7Q7 9 6 8"><path d="M5 15L15 5M11 5H15V9" stroke="#3b9be0" /></I><Chev c="ml-[3px]" />
            <span className="ml-[12px] h-[18px] w-px bg-[#484644]" />
            <I c="ml-[8px] size-[12px]" w={1.2} d="M1 7Q0 4 4 4V8M9 0V8Q13 8 12 5Q11 3 9 5M6 11Q1 10 2 14Q4 16 6 14"><path d="M14 8V13H8M11 10L8 13L11 16" stroke="#3b9be0" strokeWidth="1.800" /></I>
            <T c="ml-[2px] w-[39px]">Wrap Text</T>
          </div>
          <div className="mt-[6px] flex h-[18px] items-center text-[9.5px]">
            <Lines d="M1 2H15M1 6H10M1 10H15M1 14H10" /><Lines c="ml-[6px]" d="M1 2H15M4 6H12M1 10H15M4 14H12" /><Lines c="ml-[6px]" d="M1 2H15M6 6H15M1 10H15M6 14H15" />
            <Lines c="ml-[11px]" d="M1 1H15M9 5H15M9 10H15M1 14H15M1 7.500H6M4 5L1 7.500L4 10" /><Lines c="ml-[6px]" d="M1 1H15M9 5H15M9 10H15M1 14H15M1 7.500H6M3 5L6 7.500L3 10" />
            <span className="ml-[5px] h-[18px] w-px bg-[#484644]" />
            <I c="ml-[6px] h-[12px] w-[12px]" d="M1 1H15V15H1ZM8 1V4M8 12V15"><rect x="1" y="4" width="14" height="8" fill="#1a5f9e" stroke="#3b9be0" /><path d="M3 8H13M5 6L3 8L5 10M11 6L13 8L11 10" /></I>
            <T c="ml-[2px] w-[64px]">Merge &amp; Center</T><Chev c="ml-[7px]" />
          </div>
        </div>
      </Group>
      <Group c="w-[117px]" lc="w-[31px]" label="Number" launch>
        <div className="flex flex-col pl-[5px]">
          <span className="mt-[6px] flex h-[18px] w-[106px] items-center border border-[#6e6c6a] bg-[#3b3a39] pl-0.5 text-[9.5px]"><T c="w-[30px]">General</T><Chev c="mr-[2px] ml-auto" /></span>
          <div className="mt-[6px] flex h-[18px] items-center text-[13px]">
            <T c="ml-[4px] w-[7px]">$</T><Chev c="ml-[7px]" /><T c="ml-[8px] w-[12px]">%</T><b className="mb-[6px] ml-[8px] text-[19px] leading-[4px]">,</b>
            <span className="ml-[6px] h-[16px] w-px bg-[#484644]" />
            <span className="ml-[5px] flex flex-col items-end text-[7.500px] leading-[7px]"><span className="text-[#3b9be0]"><b>←</b><span className="text-white">0</span></span><span>.00</span></span>
            <span className="ml-[5px] flex flex-col items-end text-[7.500px] leading-[7px]"><span>.00</span><span className="text-[#3b9be0]"><b>→</b><span className="text-white">0</span></span></span>
          </div>
        </div>
      </Group>
      <Group c="w-[366px]" lc="w-[22px]" label="Styles">
        <Big c="ml-[7px] w-[54px]" wc="y" lines={[["Conditional", "w-[47px]"], ["Formatting", "w-[44px]"]]} icon={<Grid3><path d="M6 2H15V7H6ZM6 13H17V18H6Z" fill="#e02a20" stroke="none" /><path d="M6 7.500H11V12.500H6Z" fill="#1470c8" stroke="none" /></Grid3>} />
        <Big c="ml-[3px] w-[42px]" wc="y" lines={[["Format as", "w-[39px]"], ["Table", "w-[20px]"]]} icon={<Grid3><path d="M8 7.500H23V18H8Z" fill="#0f6cbd" stroke="none" /><path d="M23 6L13 17" stroke="#ddd" strokeWidth="3" /><path d="M14 15Q10 16 8 20Q13 20 15 17Z" fill="#5fb2f2" stroke="none" /></Grid3>} />
        <div className="mt-[1px] ml-[1px] flex h-[47px] w-[252px] bg-[#484644]">
          <div className="mt-[4px] ml-[2px] grid h-[40px] w-[236px] grid-cols-[76px_75px_75px] grid-rows-[17px_17px] gap-x-[4px] gap-y-[4px] text-[10px]">
            {styleCells.map(([t, k, w]) => <span key={t} className={`flex items-center pl-[3px] ${k}`}><T c={w}>{t}</T></span>)}
          </div>
          <div className="ml-auto flex w-[11px] flex-col divide-y divide-[#666] border border-[#666]">
            <span className="flex flex-1 items-center justify-center text-[#777]"><Chev c="rotate-180" /></span>
            <span className="flex flex-1 items-center justify-center"><Chev /></span>
            <span className="flex flex-1 items-center justify-center"><I d="M2 3H14M4 8L8 12L12 8" c="size-[7px]" w={2.2} /></span>
          </div>
        </div>
      </Group>
      <Group c="w-[108px]" lc="w-[18px]" label="Cells">
        <Big c="ml-[8px] w-[28px]" wc="y" lines={[["Insert", "w-[22px]"]]} icon={<Grid3><path d="M7 7.500H24V12.500H7Z" fill="#0f6cbd" stroke="none" /><path d="M12 10H1M5 6L1 10L5 14" stroke="#3b9be0" strokeWidth="1.600" /></Grid3>} />
        <Big c="ml-[2px] w-[30px]" wc="y" lines={[["Delete", "w-[25px]"]]} icon={<Grid3><path d="M3 7.500H14V12.500H3Z" fill="#0f6cbd" stroke="none" /><path d="M14 6L23 15M23 6L14 15" stroke="#e04a3a" strokeWidth="2" /></Grid3>} />
        <Big c="ml-[2px] w-[30px]" wc="y" lines={[["Format", "w-[28px]"]]} icon={<Grid3 c="h-[21px]"><path d="M7 6.500H17V13.500H7Z" fill="#0f6cbd" stroke="none" /><path d="M6 0H18" stroke="#3b9be0" strokeWidth="1.600" /></Grid3>} />
      </Group>
      <Group c="w-[150px]" lc="w-[28px]" label="Editing">
        <div className="ml-[8px] flex w-[66px] flex-col text-[9.500px]">
          <div className="flex h-[17px] items-center"><I d="M14 3V1H2L9 8L2 15H14V13" c="h-[12px] w-[11px]" /><T c="ml-[3px] w-[38px]">AutoSum</T><Chev c="ml-[7px]" /></div>
          <div className="flex h-[17px] items-center"><I d="M1 2H15V14H1ZM1 5H15" c="h-[12px] w-[11px]"><path d="M8 5V12M5 9.500L8 12.500L11 9.500" stroke="#3b9be0" strokeWidth="1.600" /></I><T c="ml-[3px] w-[11px]">Fill</T><Chev c="ml-[2px]" /></div>
          <div className="flex h-[17px] items-center"><I d="M2 10L10 1L15 6L7 14Z" c="h-[12px] w-[11px] text-[#d8b5e2]"><path d="M2 10L5 7L10 12L7 14Z" fill="#b04ac8" /></I><T c="ml-[3px] w-[20px]">Clear</T><Chev c="ml-[2px]" /></div>
        </div>
        <Big c="ml-[2px] w-[33px]" wc="y" lines={[["Sort &", "w-[26px]"], ["Filter", "w-[19px]"]]} icon={<svg viewBox="0 0 22 24" className="h-[22px] w-[22px]" fill="none" stroke="#c8c6c4" strokeWidth="1.400"><path d="M1 9L4.500 1L8 9M2 6.500H7" stroke="#3b9be0" /><path d="M1 13H8L1 21H8M10 6H21L17 11V17L14 15V11Z" /></svg>} />
        <Big c="w-[34px]" wc="y" lines={[["Find &", "w-[27px]"], ["Select", "w-[24px]"]]} icon={<svg viewBox="0 0 22 24" className="h-[22px] w-[22px]" fill="none" stroke="#c8c6c4" strokeWidth="1.400"><circle cx="14" cy="8" r="7" /><path d="M9 13L1 23" /></svg>} />
      </Group>
      <Group c="w-[46px]" lc="w-[31px]" label="Analysis">
        <Big c="w-[46px]" lines={[["Analyze", "w-[31px]"], ["Data", "w-[18px]"]]} icon={<svg viewBox="0 0 26 26" className="h-[25px] w-[25px]" fill="none" stroke="#c8c6c4"><path d="M1 1H25V24H1ZM1 4H25M1 12H25M1 18H25M9 4V24M17 4V24" strokeWidth="1.200" /><circle cx="12" cy="11" r="7.500" fill="#323130" strokeWidth="1.600" /><path d="M9 14V9M12 14V6" stroke="#fff" strokeWidth="2" /><path d="M15 14V8" stroke="#1c7fd6" strokeWidth="2.500" /><path d="M17 17L24 25" strokeWidth="2" /></svg>} />
      </Group>
      <Group c="w-[56px]" lc="w-[39px]" label="Sensitivity">
        <Big c="w-[55px]" wc="y" dim lines={[["Sensitivity", "w-[40px]"]]} icon={<svg viewBox="0 0 22 24" className="h-[23px] w-[22px]" fill="none" stroke="#7a7876" strokeWidth="1.300"><path d="M10 4H2V23H17V14" /><path d="M5 14L12 8L16 12L9 18Z" fill="#7a7876" /><path d="M14 7L18 1L21 4L17 10M12 4L20 11" strokeWidth="2" /></svg>} />
      </Group>
      <I d="M2 11L8 5L14 11" c="mt-auto mr-[6px] mb-[2px] ml-auto size-[8px]" w={1.800} />
    </div>
  );
}

const colW = ["w-[200.200px]", "w-[64.200px]", "w-[70.800px]", "w-[58px]", "w-[48px]", "w-[48.100px]"];
const cw = (i: number) => colW[i] ?? "w-[48.060px]";
const letters = "ABCDEFGHIJKLMNOPQRSTUVWXY".split("");
type Cell = { c: string; t: React.ReactNode; to?: number };
const link = "text-[#1f70c5] border-b border-[#3b86d2] h-[12px]";
const visited = "text-[#a05078] border-b border-[#a05078] h-[12px]";
const rq = "https://www.racedayquads.com/products/";
const data: Record<string, Cell> = {
  A1: { c: "w-[53px] font-bold", t: "Mechanical" },
  B1: { c: "w-[27.500px] font-bold", t: "Count" },
  C1: { c: "w-[23px] font-bold", t: "Price" },
  A2: { c: "w-[57.500px]", t: "drone frame" },
  B2: { c: "ml-auto w-[5px]", t: "1" },
  D2: { c: `w-[488px] ${link}`, t: rq + "rdq-source-one-v3-5-freestyle-frame?variant=29592522293361", to: 12 },
  A3: { c: "w-[78.500px]", t: "propellers 4 pack" },
  B3: { c: "ml-auto w-[5px]", t: "6" },
  D3: { c: `w-[665.500px] ${link}`, t: rq + "t-motor-t5147-popo-compatible-tri-blade-5-prop-4-pack-choose-your-color?variant=31263896502385", to: 16 },
  A5: { c: "w-[42px] font-bold", t: "Electrical" },
  A6: { c: "w-[33.500px]", t: "battery" },
  D6: { c: "w-[435px]", t: rq + "rdq-series-15-2v-4s-550mah-100c-lihv-battery-xt30", to: 11 },
  A7: { c: "w-[33px]", t: "motors" },
  D7: { c: `w-[348px] ${visited}`, t: rq + "iflight-xing2-2306-2555kv-motor", to: 9 },
  A8: { c: "w-[39px]", t: "4in1 ESC" },
  D8: { c: `w-[200px] ${visited}`, t: rq, to: 7 },
  A9: { c: "w-[64.500px]", t: "radio reciever" },
  A10: { c: "w-[93px]", t: "flight controller PCB" },
  A11: { c: "w-[147px]", t: "flight controller microcontroller" },
  A12: { c: "w-[190px]", t: "flight controller sensors and components" },
  A13: { c: "w-[202.500px]", t: "navigation computer single board computer", to: 1 },
  A14: { c: "w-[33.500px]", t: "camera" },
  D14: { c: `w-[190px] ${link}`, t: "https://www.adafruit.com/product/3099", to: 6 },
  A17: { c: "w-[58px] font-bold", t: "IMU devices" },
};

function Sheet() {
  return (
    <div className="flex h-[589px] shrink-0">
      <div className="flex w-[1425px] shrink-0 flex-col overflow-hidden">
        <div className="flex h-[15px] shrink-0 text-[9.500px] text-[#d8d6d4]">
          <span className="flex h-full w-[18.500px] shrink-0 items-end justify-end border-r border-[#555] pr-[2px] pb-[3px]">
            <svg viewBox="0 0 8 8" className="size-[8px]" fill="#6e6c6a"><path d="M8 0V8H0Z" /></svg>
          </span>
          {letters.map((l, i) => <span key={l} className={`flex shrink-0 items-center justify-center border-r border-[#555] pl-px ${cw(i)}`}>{l}</span>)}
        </div>
        <div className="flex h-[574px] shrink-0 flex-col bg-white font-['Lato',sans-serif] text-[10.500px] text-[#111]">
          {Array.from({ length: 40 }, (_, r) => {
            let spanTo = -1;
            return (
              <div key={r} className="flex h-[14.270px] shrink-0">
                <span className={`flex w-[18.500px] shrink-0 items-center justify-center border-r border-b border-[#444] bg-[#262626] pt-px text-[9.500px] text-[#c8c6c4] ${UI}`}>{r + 1}</span>
                {letters.map((l, i) => {
                  const d = data[l + (r + 1)];
                  if (d?.to) spanTo = d.to;
                  const sel = l === "A" && r === 5;
                  return (
                    <span key={l} className={`relative flex shrink-0 items-center border-b pt-px pr-[2px] pl-[2px] ${cw(i)} ${i < spanTo ? "border-b-[#d4d4d4]" : "border-r border-[#d4d4d4]"}`}>
                      {d && <T c={`z-10 leading-[12px] ${d.c}`}>{d.t}</T>}
                      {l === "D" && r === 7 && <T c="z-10 ml-[2px] w-[31px] leading-[12px]">pi zero</T>}
                      {sel && <span className="absolute inset-[-1px] z-10 border-2 border-[#0f78d4]" />}
                      {sel && <span className={`absolute top-[-8px] right-[-8px] z-20 flex size-[15px] items-center justify-center rounded-full bg-[#0f78d4] text-[7px] text-white ${UI}`}>SJ</span>}
                    </span>
                  );
                })}
              </div>
            );
          })}
          <div className="flex flex-1">
            <span className="w-[18.500px] shrink-0 bg-[#262626]" />
            {letters.map((l, i) => <span key={l} className={`shrink-0 border-r border-[#d4d4d4] ${cw(i)}`} />)}
          </div>
        </div>
      </div>
      <div className="ml-[2px] flex w-[12px] flex-col text-[#ddd]">
        <span className="mt-[3px] flex h-[10px] items-center justify-center border border-[#777] bg-[#444]"><Down c="rotate-180" /></span>
        <span className="mt-px h-[528px] border border-[#777] bg-[#505050]" />
        <span className="mt-auto mb-px flex h-[10px] items-center justify-center border border-[#777] bg-[#444]"><Down /></span>
      </div>
    </div>
  );
}

const tabs: [string, string, string][] = [
  ["Overall", "w-[51px] border-x", "w-[31px]"],
  ["Schedule", "w-[59px] border-r", "w-[39px]"],
  ["Micro_Software", "w-[89px]", "w-[68px]"],
  ["Weight-Power-Size Constraints", "w-[161px] border-l", "w-[134px]"],
  ["BOM", "w-[41px]", "w-[22px]"],
  ["Pi Setup", "w-[56px]", "w-[35px]"],
  ["Initial_PCB", "w-[67px] border-x", "w-[43px]"],
  ["Final_PCB", "w-[62px] border-r", "w-[40px]"],
  ["PCB_JLC", "w-[55px] border-r", "w-[34px]"],
  ["TODOs", "w-[51px] border-r", "w-[32px]"],
];

function Excel() {
  return (
    <div className={`flex h-[811px] w-[1441px] shrink-0 flex-col bg-[#262626] text-white ${UI}`}>
      <div className="flex h-[26px] shrink-0 items-center bg-[#252423] text-[9.500px] text-[#a8a6a4]">
        <T c="ml-[15px] w-[38px]">AutoSave</T>
        <span className="ml-[5px] flex h-[12px] w-[29px] items-center rounded-full bg-white text-[7.500px] text-[#222]"><T c="ml-[5px] w-[9px]">On</T><i className="ml-[6px] size-[6px] rounded-full bg-[#222]" /></span>
        <I d="M1 1H15V6M1 1V15H6M4 1V6H12V1M4 15V10H7M8 11Q10 8 14 10M14 8V10.500H12M15 12Q13 15 9 14M9 16V13H11" c="ml-[9px] size-[13px]" />
        <I d="M2 2V8H8M2 8Q7 1 12 4Q16 9 7 15" c="ml-[8px] size-[13px]" w={1.500} /><Chev c="ml-[3px]" />
        <I d="M14 2V8H8M14 8Q9 1 4 4Q0 9 9 15" c="ml-[7px] size-[13px]" w={1.500} /><Chev c="ml-[3px]" />
        <I d="M6 12V4Q7 2 8 4V9L13 10V13L11 16H7L3 11M3 5Q3 1 7 1Q11 1 11 5" c="ml-[5px] size-[13px]" w={1.300} /><Chev c="ml-[4px]" />
        <I d="M2 3H14M4 8L8 12L12 8" c="ml-[10px] size-[8px]" w={2} />
        <T c="ml-[123px] w-[72px]">Requirements.xlsx</T>
        <I d="M6 5a2.500 2.500 0 1 0 .1 0M1 15Q2 10 6 10Q8 10 9 12M12 1a2 2 0 1 0 .1 0M10 7Q15 5 15.500 11" c="ml-[6px] size-[10px]" />
        <T c="ml-[5px] w-[29px]">• Saved</T><I d="M2 5L8 11L14 5" c="ml-[3px] size-[9px]" w={1.800} />
        <div className="ml-[117px] flex h-[18px] w-[277px] items-center border border-[#55534f] text-[#4c4a48]">
          <I d="M10 1a5 5 0 1 0 .1 0M6.500 9.500L1 15" c="ml-[14px] size-[12px]" />
          <T c="ml-[11px] w-[59px]">Search (Alt+Q)</T>
        </div>
        <T c="ml-[269px] w-[99px]">Michael Joseph Langford</T>
        <svg viewBox="0 0 18 18" className="ml-[8px] size-[18px]"><circle cx="9" cy="9" r="9" fill="#3d3a38" /><path d="M3 3Q9-1 14 5L13 8H6Z" fill="#5a4c42" /><ellipse cx="10" cy="8" rx="3.500" ry="4.500" fill="#c08d78" /><path d="M4 16Q6 11 10 13Q14 12 15 15Q9 20 4 16" fill="#2c3a4a" /></svg>
        <I d="M3 14L4 8L12 2L14 4L8 12L3 14M9 1L15 7M5 13L10 6" c="ml-[21px] size-[12px]" />
        <I d="M1 3H15V13H1ZM1 5.500H15M8 12V7M6 9L8 7L10 9" c="ml-[22px] size-[11px]" />
        <span className="ml-[12px] flex h-[26px] w-[34px] items-center justify-center bg-[#323130]"><i className="h-px w-[8px] bg-white" /></span>
        <I d="M2 5H11V14H2ZM5 5V2H14V11H11" c="ml-[13px] size-[9px]" w={1.500} />
        <I d="M1 1L15 15M15 1L1 15" c="ml-[26px] size-[9px]" w={1.500} />
      </div>
      <div className="flex h-[95px] shrink-0 flex-col bg-[#323130]">
        <div className="flex h-[25px] shrink-0 items-center text-[10px] text-[#eceae8]">
          <T c="ml-[12px] w-[14px]">File</T>
          <span className="ml-[25px] flex h-[20px] flex-col border-b-2 border-white pt-[2px] font-bold"><T c="w-[28px]">Home</T></span>
          <T c="ml-[20px] w-[25px]">Insert</T><T c="ml-[21px] w-[23px]">Draw</T><T c="ml-[22px] w-[54px]">Page Layout</T>
          <T c="ml-[22px] w-[40px]">Formulas</T><T c="ml-[21px] w-[21px]">Data</T><T c="ml-[21px] w-[31px]">Review</T>
          <T c="ml-[20px] w-[21px]">View</T><T c="ml-[21px] w-[20px]">Help</T><T c="ml-[21px] w-[23px]">Team</T>
          <span className="ml-[699px] flex size-[18px] items-center justify-center rounded-full bg-[#0f78d4] text-[8px]">SJ</span>
          <span className="ml-[12px] flex size-[18px] items-center justify-center rounded-full bg-[#881798] text-[8px]">GC</span>
          <span className="ml-[16px] flex h-[18px] w-[75px] items-center border border-[#5c5a58] bg-[#3b3a39] font-semibold"><I d="M1 2H15V11H7L4 14V11H1Z" c="ml-[5px] size-[10px]" w={1.500} /><T c="ml-[3px] w-[50px]">Comments</T></span>
          <span className="ml-[6px] flex h-[18px] w-[61px] items-center border border-[#5c5a58] bg-[#3b3a39] font-semibold"><I d="M6 3H1V15H13V11M5 10Q6 5 11 5V2L15 6L11 10V7Q7 7 5 10" c="ml-[4px] size-[10px]" w={1.500} /><T c="ml-[3px] w-[26px]">Share</T><Chev c="ml-[8px]" /></span>
        </div>
        <Ribbon />
      </div>
      <div className="mt-[7px] flex h-[20px] shrink-0 items-center text-[10px]">
        <span className="ml-[3px] flex h-full w-[77px] items-center border border-[#404040] bg-[#333]"><T c="ml-[5px] w-[17px]">C19</T><Down c="mr-[6px] ml-auto h-[3px]" /></span>
        <I c="ml-[8px] size-[8px]" w={2.600} d="M8 1V4M8 6.500V9.500M8 12V15" />
        <span className="ml-[6px] flex h-full w-[83px] items-center border border-[#404040] bg-[#333] text-[#777]">
          <I d="M2 2L14 14M14 2L2 14" c="ml-[9px] size-[9px]" w={1.700} /><I d="M1 9L5 13L15 3" c="ml-[18px] size-[10px]" w={2.500} /><i className="ml-[17px] font-['Liberation_Serif',serif] text-[11px] font-bold text-white">fx</i>
        </span>
        <span className="ml-[2px] flex h-full w-[1250px] items-center justify-end border border-[#404040] bg-[#363636] pr-[3px]"><Chev /></span>
      </div>
      <div className="h-[7px] shrink-0" />
      <Sheet />
      <div className="flex h-[20px] shrink-0 items-center text-[10px] text-[#e8e6e4]">
        <Down c="ml-[19px] h-[4px] rotate-90 text-[#999]" /><Down c="ml-[15px] h-[4px] -rotate-90 text-[#999]" />
        <span className="ml-[29px] flex h-full items-center">
          {tabs.map(([t, a, b]) => (
            <span key={t} className={`flex shrink-0 items-center justify-center ${a} ${t === "BOM" ? "h-[18px] self-start border-b border-[#217346] bg-white font-bold text-[#217346]" : "h-[15px] border-[#666]"}`}><T c={b}>{t}</T></span>
          ))}
        </span>
        <I d="M8 1a7 7 0 1 0 .1 0M8 4.500V11.500M4.500 8H11.500" c="ml-[25px] size-[12px]" w={1.700} />
        <I c="ml-[508px] size-[9px]" w={1.800} d="M8 1V4M8 6.500V9.500M8 12V15" />
        <span className="ml-[8px] flex h-[11px] w-[97px] items-center bg-[#333]">
          <span className="flex h-full w-[11px] items-center justify-center border border-[#777]"><Down c="h-[3px] rotate-90" /></span>
          <span className="h-full w-[71px] border border-[#777] bg-[#505050]" />
          <span className="ml-auto flex h-full w-[11px] items-center justify-center border border-[#777]"><Down c="h-[3px] -rotate-90" /></span>
        </span>
      </div>
      <div className="flex h-[17px] shrink-0 items-center bg-[#323130] text-[9px] text-[#e8e6e4]">
        <T c="ml-[5px] w-[24px]">Ready</T>
        <I d="M8 1a1.500 1.500 0 1 0 .1 0M2 5L6 6V10L4 15M14 5L10 6V8M9 9L15 15M15 9L9 15" c="ml-[14px] size-[11px]" w={1.500} />
        <T c="ml-[3px] w-[93px]">Accessibility: Investigate</T>
        <I d="M5 12H1V2H15V7" c="ml-[977px] h-[11px] w-[11px]" w={1.400}><circle cx="11" cy="11" r="3" strokeWidth="2" /></I>
        <T c="ml-[2px] w-[62px]">Display Settings</T>
        <span className="ml-[14px] flex h-full w-[30px] items-center justify-center bg-[#5c5a58]"><I d="M1 1H15V15H1ZM1 5.500H15M1 10.500H15M5.500 1V15M10.500 1V15" c="size-[10px]" /></span>
        <I d="M1 1H15V15H1ZM4 4H12V12H4ZM6 7H10M6 9.500H10" c="ml-[9px] size-[10px]" />
        <I d="M1 1H15V15H1ZM6 1V9M11 1V9M1 9H11" c="ml-[20px] size-[10px]" />
        <T c="ml-[15px] w-[6px]">−</T>
        <span className="ml-[4px] flex h-[9px] w-[75px] items-center"><i className="h-px w-[36px] bg-[#aaa]" /><i className="h-[8px] w-[4px] bg-white" /><i className="h-px flex-1 bg-[#aaa]" /></span>
        <T c="ml-[4px] w-[6px]">+</T><T c="ml-[10px] w-[20px]">100%</T>
      </div>
      <div className="flex h-[30px] shrink-0 items-center bg-gradient-to-r from-[#2b2b29] via-[#2d302d] to-[#2c2b2a]">
        <WinLogo c="ml-[11px] size-[13px]" /><TaskView c="ml-[24px] size-[13px]" />
        <span className="ml-[12px] flex h-full"><AppButtons small /></span>
        <PenIcon c="ml-[419px] size-[12px]" />
        <div className="ml-[10px] flex w-[40px] shrink-0 flex-col items-center text-[8.500px] leading-[13px]"><T c="w-[32px]">4:32 PM</T><T c="w-[40px]">9/25/2022</T></div>
      </div>
    </div>
  );
}

export default function App() {
  return (
    <div className="flex h-[1245px] w-[2883px] items-start overflow-hidden bg-white">
      <div className="flex h-[811px] w-[1442px] shrink-0 flex-col overflow-hidden">
        <SerialPlot />
        <LeftTaskbar />
      </div>
      <Excel />
    </div>
  );
}
